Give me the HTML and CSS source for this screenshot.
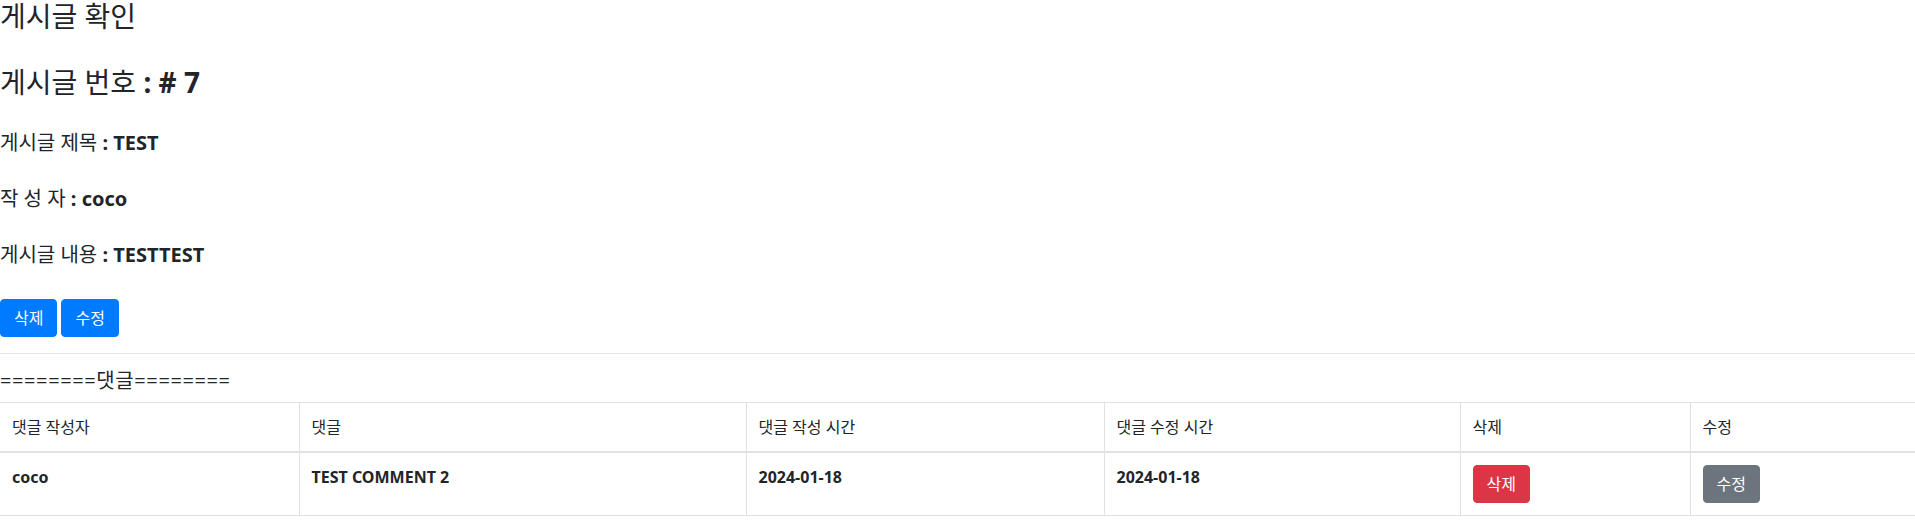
FILE: index.html
```html
<!DOCTYPE html>
<html lang="ko">
<head>
<meta charset="utf-8">
<title>게시글 확인</title>
<link rel="stylesheet" href="styles.css">
</head>
<body>
<h3 class="page-title">게시글 확인</h3>
<h3 class="post-no">게시글 번호 <b>: # 7</b></h3>
<div class="fields">
  <p class="field">게시글 제목 <b>: TEST</b></p>
  <p class="field">작 성 자 <b>: coco</b></p>
  <p class="field">게시글 내용 <b>: TESTTEST</b></p>
</div>
<div class="actions">
  <button class="btn btn-primary">삭제</button>
  <button class="btn btn-primary">수정</button>
</div>
<hr class="sep">
<div class="divider-text">========댓글========</div>
<table class="comments">
  <colgroup>
    <col class="c-writer">
    <col class="c-body">
    <col class="c-created">
    <col class="c-updated">
    <col class="c-del">
    <col class="c-edit">
  </colgroup>
  <thead>
    <tr>
      <th>댓글 작성자</th>
      <th>댓글</th>
      <th>댓글 작성 시간</th>
      <th>댓글 수정 시간</th>
      <th>삭제</th>
      <th>수정</th>
    </tr>
  </thead>
  <tbody>
    <tr>
      <td>coco</td>
      <td>TEST COMMENT 2</td>
      <td>2024-01-18</td>
      <td>2024-01-18</td>
      <td><button class="btn btn-danger">삭제</button></td>
      <td><button class="btn btn-secondary">수정</button></td>
    </tr>
  </tbody>
</table>
</body>
</html>
```
FILE: styles.css
```css
html, body {
  margin: 0;
  padding: 0;
  background: #fff;
}

body {
  font-family: "Noto Sans", "Noto Sans CJK KR", sans-serif;
  font-size: 16px;
  line-height: 1.5;
  color: #212529;
}

.page-title,
.post-no {
  font-size: 28px;
  font-weight: 400;
  line-height: 1.2;
  margin: 0;
}

.page-title {
  margin-bottom: 32px;
}

.post-no b,
.field b {
  font-weight: 700;
}

.fields {
  padding: 29px 0;
}

.field {
  font-size: 20px;
  line-height: 30px;
  font-weight: 400;
  margin: 0;
}

.field + .field {
  margin-top: 26px;
}

.actions {
  display: flex;
  gap: 4px;
}

.btn {
  display: inline-block;
  font-family: inherit;
  font-size: 16px;
  line-height: 24px;
  font-weight: 400;
  padding: 6px 13px;
  border: 1px solid transparent;
  border-radius: 4px;
  color: #fff;
  cursor: pointer;
}

.btn-primary {
  background: #007bff;
  border-color: #007bff;
}

.btn-danger {
  background: #dc3545;
  border-color: #dc3545;
}

.btn-secondary {
  background: #6c757d;
  border-color: #6c757d;
}

.sep {
  border: 0;
  border-top: 1px solid rgba(0, 0, 0, 0.1);
  margin: 16px 0 12px;
  height: 0;
}

.divider-text {
  font-size: 20px;
  line-height: 30px;
  letter-spacing: 0.6px;
}

.comments {
  width: 100%;
  margin-top: 6px;
  border-collapse: collapse;
  table-layout: fixed;
}

.c-writer { width: 299px; }
.c-body { width: 447px; }
.c-created { width: 358px; }
.c-updated { width: 356px; }
.c-del { width: 230px; }
.c-edit { width: 225px; }

.comments th,
.comments td {
  padding: 12px;
  text-align: left;
  vertical-align: top;
  border: 1px solid #dee2e6;
  line-height: 24px;
}

.comments th {
  font-weight: 400;
  border-bottom-width: 2px;
}

.comments td {
  font-weight: 700;
}

.comments th:first-child,
.comments td:first-child {
  border-left: 0;
}

.comments th:last-child,
.comments td:last-child {
  border-right: 0;
}
```
